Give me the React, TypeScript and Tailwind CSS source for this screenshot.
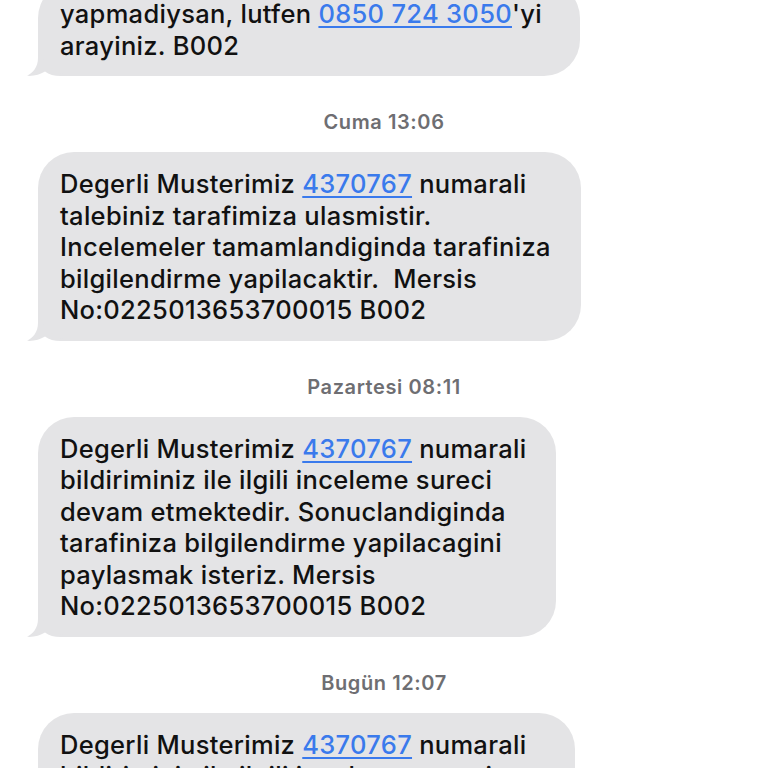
import React from 'react';

const Tail: React.FC = () => (
  <svg
    className="absolute bottom-0 left-[-11px]"
    width="52"
    height="36"
    viewBox="0 0 52 36"
  >
    <path
      d="M11 0 V18 C11 27 6 33 0 35.8 C7 36.3 13 34.5 18 31.5 C22 34.5 27 36 34 36 H52 V0 Z"
      fill="#e4e4e6"
    />
  </svg>
);

const Link: React.FC<{ children: React.ReactNode }> = ({ children }) => (
  <span className="text-[#3a7aec] underline decoration-[1.5px] underline-offset-[3px]">{children}</span>
);

const Bubble: React.FC<{ width: string; className?: string; children: React.ReactNode }> = ({
  width,
  className = '',
  children,
}) => (
  <div className={`relative ml-[38px] ${width} ${className}`}>
    <div className="relative z-10 rounded-[36px] bg-[#e4e4e6] pl-[22px] pr-[20px] pt-[16px] pb-[15px]">
      <p className="whitespace-pre text-[25.5px] font-medium leading-[31.5px] tracking-[0.3px] text-[#111]">
        {children}
      </p>
    </div>
    <Tail />
  </div>
);

const Stamp: React.FC<{ day: string; time: string }> = ({ day, time }) => (
  <div className="mt-[34px] mb-[18px] text-center text-[20px] font-semibold leading-[24px] tracking-[0.6px] text-[#6e6e72]">
    {day} {time}
  </div>
);

export default function App() {
  return (
    <div
      className="h-[768px] w-[768px] overflow-hidden bg-white"
      style={{ fontFamily: 'Inter, "Noto Sans", sans-serif' }}
    >
      <Bubble width="w-[542px]" className="mt-[-18px]">
        yapmadiysan, lutfen <Link>0850 724 3050</Link>'yi{'\n'}arayiniz. B002
      </Bubble>

      <Stamp day="Cuma" time="13:06" />
      <Bubble width="w-[543px]">
        Degerli Musterimiz <Link>4370767</Link> numarali{'\n'}
        talebiniz tarafimiza ulasmistir.{'\n'}
        Incelemeler tamamlandiginda tarafiniza{'\n'}
        bilgilendirme yapilacaktir.  Mersis{'\n'}
        No:0225013653700015 B002
      </Bubble>

      <Stamp day="Pazartesi" time="08:11" />
      <Bubble width="w-[518px]">
        Degerli Musterimiz <Link>4370767</Link> numarali{'\n'}
        bildiriminiz ile ilgili inceleme sureci{'\n'}
        devam etmektedir. Sonuclandiginda{'\n'}
        tarafiniza bilgilendirme yapilacagini{'\n'}
        paylasmak isteriz. Mersis{'\n'}
        No:0225013653700015 B002
      </Bubble>

      <Stamp day="Bugün" time="12:07" />
      <Bubble width="w-[537px]">
        Degerli Musterimiz <Link>4370767</Link> numarali{'\n'}
        bildiriminiz ile ilgili inceleme sureci{'\n'}
        devam etmektedir.
      </Bubble>
    </div>
  );
}
